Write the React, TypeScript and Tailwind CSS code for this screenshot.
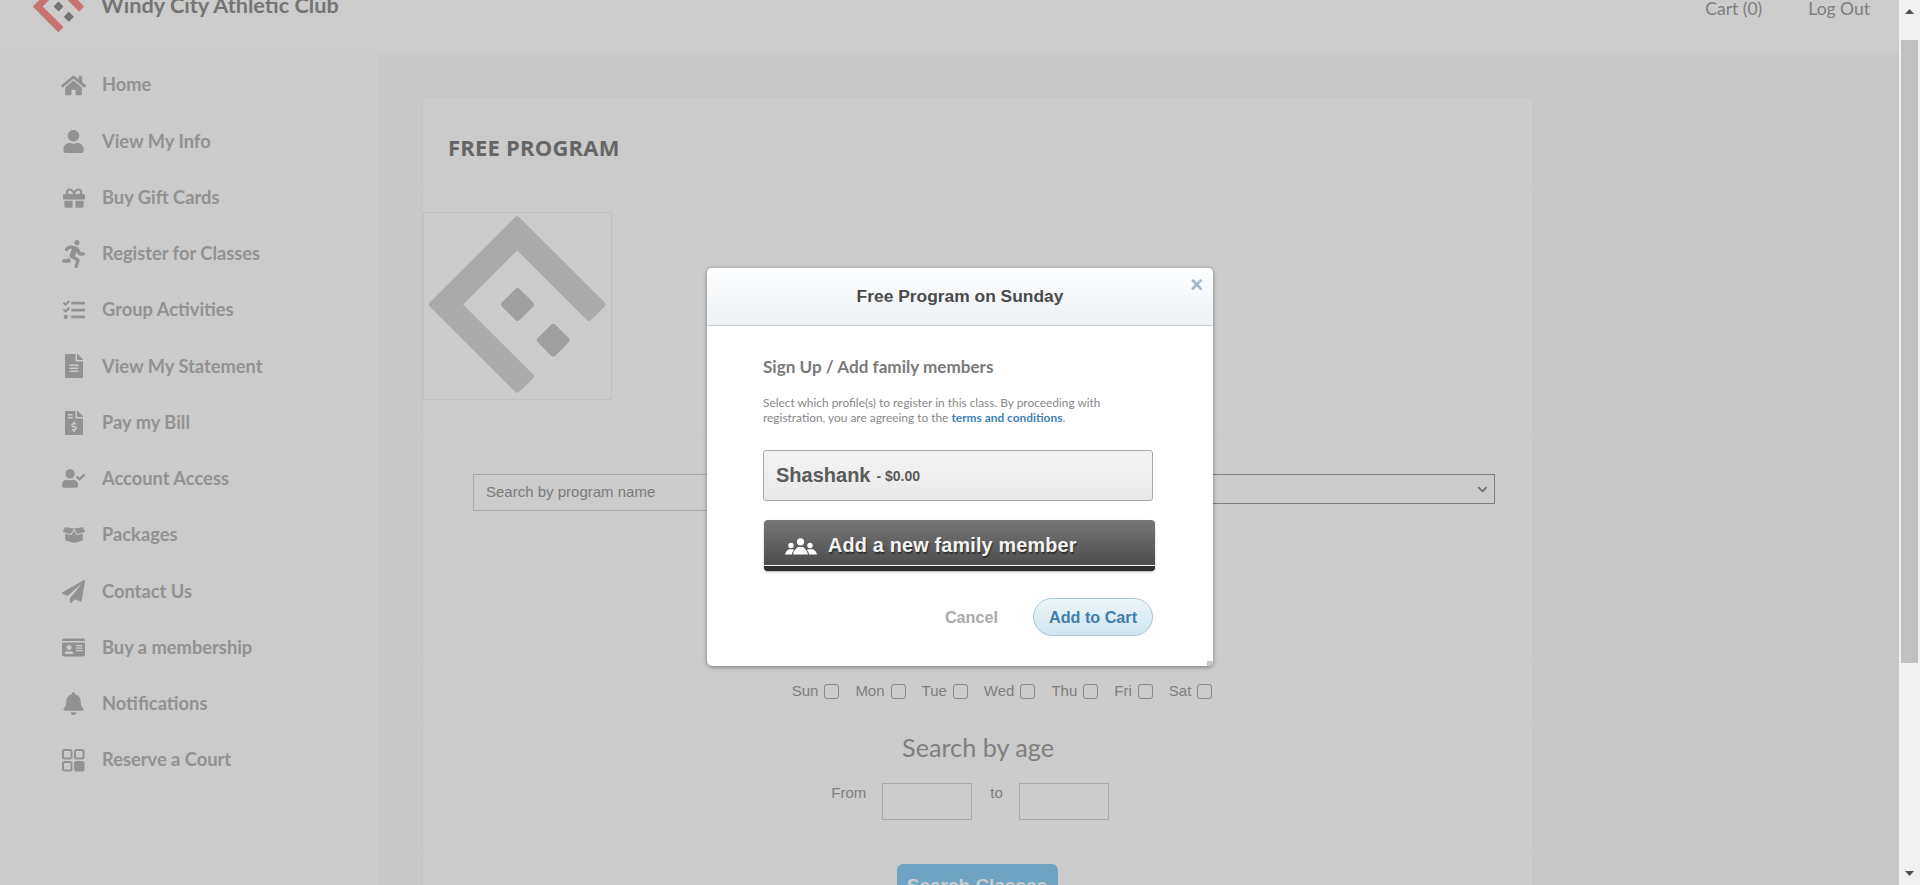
import React from "react";
import {
  FaHome, FaUser, FaGift, FaRunning, FaTasks, FaFileAlt, FaFileInvoiceDollar,
  FaUserCheck, FaBoxOpen, FaPaperPlane, FaIdCard, FaBell, FaChevronDown,
} from "react-icons/fa";

function Logo({ main, dot, className }: { main: string; dot: string; className: string }) {
  return (
    <svg viewBox="88 375 530 530" className={className}>
      <path d="M352 385 L607 640 L567 680 L352 465 L177 640 L393 855 L352 895 L97 640 Z" fill={main} stroke={main} strokeWidth="18" strokeLinejoin="round" />
      <path d="M353 600 L393 640 L353 680 L313 640 Z" fill={dot} stroke={dot} strokeWidth="18" strokeLinejoin="round" />
      <path d="M460 707 L500 747 L460 787 L420 747 Z" fill={dot} stroke={dot} strokeWidth="18" strokeLinejoin="round" />
    </svg>
  );
}

function CourtIcon() {
  return (
    <svg viewBox="0 0 23 23" className="w-[23px] h-[23px]" fill="none" stroke="#b7b7b7" strokeWidth="2">
      <rect x="1" y="1" width="8.5" height="8.5" rx="1.5" />
      <rect x="13" y="1" width="8.5" height="8.5" rx="1.5" />
      <rect x="1" y="13" width="8.5" height="8.5" rx="1.5" />
      <rect x="13" y="13" width="8.5" height="8.5" rx="1.5" fill="#b7b7b7" />
    </svg>
  );
}

const nav: { label: string; icon: React.ReactNode }[] = [
  { label: "Home", icon: <FaHome size={25} /> },
  { label: "View My Info", icon: <FaUser size={23} /> },
  { label: "Buy Gift Cards", icon: <FaGift size={22} /> },
  { label: "Register for Classes", icon: <FaRunning size={28} /> },
  { label: "Group Activities", icon: <FaTasks size={22} /> },
  { label: "View My Statement", icon: <FaFileAlt size={24} /> },
  { label: "Pay my Bill", icon: <FaFileInvoiceDollar size={24} /> },
  { label: "Account Access", icon: <FaUserCheck size={23} /> },
  { label: "Packages", icon: <FaBoxOpen size={22} /> },
  { label: "Contact Us", icon: <FaPaperPlane size={23} /> },
  { label: "Buy a membership", icon: <FaIdCard size={23} /> },
  { label: "Notifications", icon: <FaBell size={23} /> },
  { label: "Reserve a Court", icon: <CourtIcon /> },
];

const days = ["Sun", "Mon", "Tue", "Wed", "Thu", "Fri", "Sat"];
const arial = "[font-family:'Liberation_Sans',Arial,sans-serif]";

export default function App() {
  return (
    <div className="flex w-[1920px] h-[885px] overflow-hidden bg-[#f1f1f1] [font-family:Lato,sans-serif]">
      <div className="relative w-[1899px] h-[885px] overflow-hidden bg-[#fafafa]">
        <header className="flex justify-between h-[53px] bg-white overflow-hidden">
          <div className="flex items-start pl-[33px]">
            <Logo main="#fa9090" dot="#929292" className="w-[51px] h-[51px] -mt-[19px] shrink-0" />
            <span className="ml-[17px] -mt-[9px] text-[21.7px] leading-[28px] font-bold text-[#929292]">Windy City Athletic Club</span>
          </div>
          <nav className="flex items-start gap-[46px] pr-[29px] text-[17.5px] leading-[18px] text-[#9f9f9f]">
            <span>Cart (0)</span>
            <span>Log Out</span>
          </nav>
        </header>

        <div className="flex h-[832px]">
          <aside className="w-[378px] shrink-0 bg-[#fefefe] pt-[4px] flex flex-col">
            {nav.map((n) => (
              <div key={n.label} className="flex items-center h-[56.25px] pl-[61px] text-[#b7b7b7]">
                <span className="w-[25px] flex justify-center shrink-0">{n.icon}</span>
                <span className="ml-[16px] text-[18.3px] font-bold">{n.label}</span>
              </div>
            ))}
          </aside>

          <main className="flex-1 pl-[45px] pt-[45px] overflow-hidden">
            <section className="w-[1110px] bg-[#fefefe] shadow-[0_0_3px_rgba(0,0,0,0.06)] text-[#a0a0a0]">
              <div className="h-[90px] flex items-center pl-[25px] pt-[9px] border-b border-[#fbfbfb]">
                <h1 className="text-[22px] font-bold tracking-[0.2px] text-[#808080] [font-family:'Open_Sans',sans-serif]">FREE PROGRAM</h1>
              </div>
              <div className="pt-[24px] pb-[37px] border-b border-[#fbfbfb]">
                <div className="w-[189px] h-[188px] border border-[#f0f0f0] pb-[4px] flex items-center justify-center">
                  <Logo main="#d5d5d5" dot="#c7c7c7" className="w-[177px] h-[177px]" />
                </div>
              </div>
              <div className={`h-[224px] pt-[36px] pl-[50px] pr-[38px] flex items-start gap-[10px] border-b border-[#fbfbfb] ${arial}`}>
                <div className="w-[480px] h-[37px] border border-[#d3d3d3] flex items-center pl-[12px] text-[15px] text-[#9c9c9c]">Search by program name</div>
                <div className="flex-1 h-[30px] border border-[#9f9f9f] flex items-center justify-end pr-[6px] text-[#8f8f8f]">
                  <FaChevronDown size={11} />
                </div>
              </div>
              <div className={`h-[60px] pb-[2px] flex items-center justify-center pl-[48px] text-[15px] text-[#a0a0a0] ${arial}`}>
                {days.map((d) => (
                  <label key={d} className="flex items-center gap-[6px] mx-[8px]">
                    <span>{d}</span>
                    <input type="checkbox" className="appearance-none w-[15px] h-[15px] rounded-[3px] border border-[#aaaaaa] bg-white/10" />
                  </label>
                ))}
              </div>
              <div className="h-[131px] border-t border-b border-[#fbfbfb] pt-[7px]">
                <h2 className="text-[25.2px] leading-[34px] text-center text-[#9f9f9f]">Search by age</h2>
                <div className={`mt-[19px] flex items-start justify-center pr-[16px] text-[15px] text-[#a0a0a0] ${arial}`}>
                  <span className="mr-[16px] -mt-[1px]">From</span>
                  <div className="w-[90px] h-[37px] border border-[#d3d3d3]" />
                  <span className="ml-[18px] mr-[16px] -mt-[1px]">to</span>
                  <div className="w-[90px] h-[37px] border border-[#d3d3d3]" />
                </div>
              </div>
              <div className="flex justify-center pt-[11px] pr-[2px]">
                <button className={`w-[161px] h-[44px] rounded-[6px] bg-[#8bccf5] text-white font-bold text-[19px] ${arial}`}>Search Classes</button>
              </div>
            </section>
          </main>
        </div>

        <div className="absolute inset-0 bg-black/20" />

        <div className="absolute left-[707px] top-[268px] w-[506px] h-[398px] rounded-[5px] bg-[#fcfcfc] shadow-[0_1px_4px_rgba(0,0,0,0.4)] overflow-hidden">
          <div className={`h-[58px] flex items-center justify-center border-b border-[#c9ced2] bg-gradient-to-b from-[#fcfdfe] to-[#eef2f5] text-[17.4px] font-bold text-[#4a4a4a] ${arial}`}>
            Free Program on Sunday
          </div>
          <span className={`absolute right-[10px] top-[6px] text-[22px] leading-[22px] font-bold text-[#9fb3d1] ${arial}`}>×</span>
          <div className="mx-[5px] h-[340px] bg-white pt-[30px] pl-[51px] pr-[55px]">
            <h3 className="text-[17.1px] leading-[22px] font-bold text-[#7a7a7a]">Sign Up / Add family members</h3>
            <p className="mt-[17px] text-[11.9px] leading-[15px] text-[#888888]">
              Select which profile(s) to register in this class. By proceeding with<br />
              registration, you are agreeing to the <span className="font-bold text-[#3f83b5]">terms and conditions</span>.
            </p>
            <div className={`mt-[25px] h-[51px] w-[390px] rounded-[3px] border border-[#a9a9a9] bg-gradient-to-b from-[#f4f4f4] to-[#e8e8e8] flex items-center pl-[12px] pb-[1px] text-[#5a5a5a] font-bold ${arial}`}>
              <span className="text-[20px]">Shashank</span>
              <span className="ml-[6px] text-[14px] mt-[3px]">- $0.00</span>
            </div>
            <div className={`relative mt-[19px] ml-[1px] h-[51px] w-[391px] rounded-[4px] bg-gradient-to-b from-[#777777] to-[#484848] shadow-[0_1px_2px_rgba(0,0,0,0.3)] flex items-center pl-[21px] pt-[1px] text-[#f4f4f4] font-bold text-[19.8px] [text-shadow:1px_2px_1px_rgba(0,0,0,0.45)] ${arial}`}>
              <svg viewBox="0 0 32 17" className="w-[32px] h-[17px] shrink-0" fill="#ffffff">
                <circle cx="15.5" cy="3.8" r="3.6" />
                <path d="M8 16.5 C9 12.5 11 10.5 13 9 H18 C20 10.5 22 12.5 23 16.5 Z" />
                <circle cx="6" cy="7.5" r="2.7" />
                <path d="M0 16.5 C0.5 13.5 2 12.5 4 11.2 H8 L9 12 C8 13.5 7 15 6.8 16.5 Z" />
                <circle cx="25" cy="7.5" r="2.7" />
                <path d="M32 16.5 C31.5 13.5 30 12.5 28 11.2 H23 L22 12 C23 13.5 24 15 24.2 16.5 Z" />
              </svg>
              <span className="ml-[11px] tracking-[0.2px]">Add a new family member</span>
              <span className="absolute left-0 right-0 bottom-[5px] h-px bg-white" />
              <span className="absolute left-0 right-0 bottom-0 h-[5px] rounded-b-[4px] bg-[#2e2e2e]" />
            </div>
            <div className={`mt-[27px] flex items-center justify-end font-bold text-[16.2px] ${arial}`}>
              <span className="text-[#a9a9a9] mr-[35px]">Cancel</span>
              <button className="w-[120px] h-[38px] rounded-full border border-[#a9c9d9] bg-gradient-to-b from-[#eef6fa] to-[#cfe4ef] text-[#3f7fae]">Add to Cart</button>
            </div>
          </div>
          <div className="absolute right-0 bottom-0 w-[6px] h-[5px] bg-[#c8c8c8]" />
        </div>
      </div>

      <div className="w-[21px] h-[885px] bg-[#f1f1f1] flex flex-col items-center">
        <svg viewBox="0 0 9 5" className="w-[9px] h-[5px] mt-[9px] shrink-0" fill="#505050"><path d="M4.5 0 L9 5 L0 5 Z" /></svg>
        <div className="w-[17px] h-[623px] mt-[26px] bg-[#c1c1c1] shrink-0" />
        <svg viewBox="0 0 9 5" className="w-[9px] h-[5px] mt-[208px] shrink-0" fill="#505050"><path d="M0 0 L9 0 L4.5 5 Z" /></svg>
      </div>
    </div>
  );
}
